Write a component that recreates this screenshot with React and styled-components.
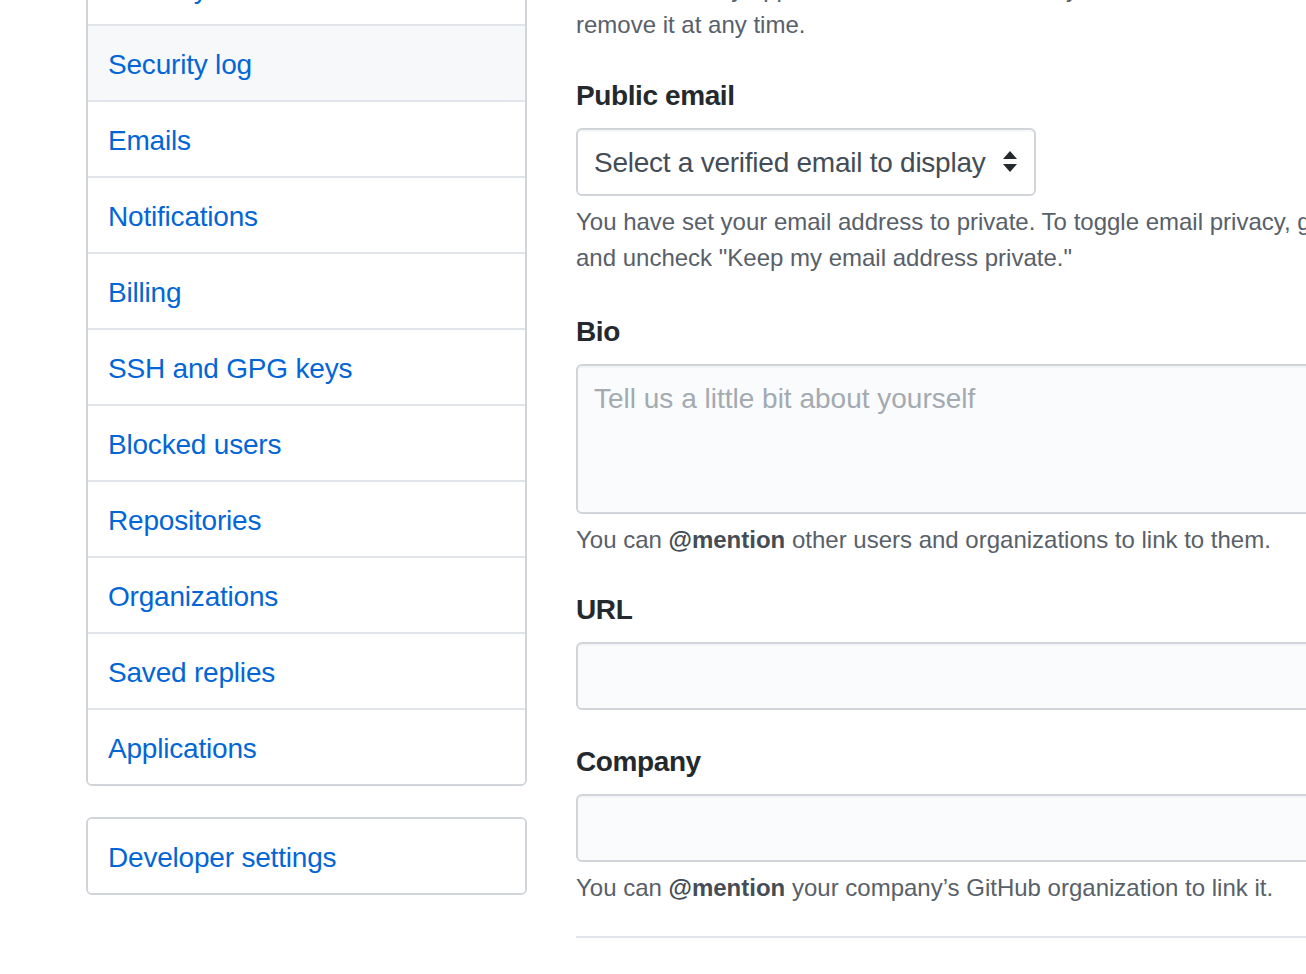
import React from 'react';
import styled, { createGlobalStyle } from 'styled-components';

const GlobalStyle = createGlobalStyle`
  html, body {
    margin: 0;
    padding: 0;
    background: #fff;
    overflow: hidden;
  }
  body {
    font-family: "Liberation Sans", Arial, sans-serif;
    color: #24292e;
  }
`;

const Page = styled.div`
  display: flex;
  align-items: flex-start;
  gap: 49px;
  padding-left: 86px;
  width: 1500px;
`;

const SideColumn = styled.nav`
  flex: 0 0 441px;
  display: flex;
  flex-direction: column;
  gap: 31px;
  margin-top: -52px;
`;

const Menu = styled.div`
  border: 2px solid #d1d5da;
  border-radius: 6px;
  background: #fff;
  overflow: hidden;
`;

const MenuItem = styled.a`
  display: block;
  padding: 18px 20px 14px;
  font-size: 28px;
  line-height: 42px;
  letter-spacing: -0.2px;
  color: #0366d6;
  text-decoration: none;
  background: ${(p) => (p.$active ? '#f6f8fa' : '#fff')};
  & + & {
    border-top: 2px solid #e1e4e8;
  }
`;

const Main = styled.main`
  flex: 0 0 880px;
  margin-top: -29px;
`;

const Note = styled.p`
  margin: ${(p) => (p.$top ? '0' : '8px 0 0')};
  font-size: 24px;
  line-height: 36px;
  color: #586069;
  white-space: nowrap;

  strong {
    color: #444d56;
    font-weight: 700;
  }
  a {
    color: #0366d6;
    text-decoration: none;
  }
`;

const FormGroup = styled.div`
  margin-top: ${(p) => p.$gap}px;
`;

const Label = styled.label`
  display: block;
  font-size: 28px;
  line-height: 40px;
  font-weight: 700;
  letter-spacing: -0.4px;
  margin-bottom: 12px;
  color: #24292e;
`;

const fieldBase = `
  box-sizing: border-box;
  display: block;
  border: 2px solid #d1d5da;
  border-radius: 6px;
  background: #fafbfc;
  box-shadow: inset 0 2px 0 rgba(225, 228, 232, 0.3);
  font-family: "Liberation Sans", Arial, sans-serif;
  font-size: 28px;
  outline: none;
`;

const SelectBox = styled.div`
  ${fieldBase}
  position: relative;
  width: 460px;
  height: 68px;
  padding: 0 50px 0 16px;
  background: #fff;
  color: #444d56;
  line-height: 65px;
  letter-spacing: -0.25px;
  white-space: nowrap;
`;

const Caret = styled.svg`
  position: absolute;
  right: 17px;
  top: 21px;
`;

const TextInput = styled.input`
  ${fieldBase}
  width: 880px;
  height: 68px;
  padding: 0 16px;
  color: #24292e;
`;

const TextArea = styled.textarea`
  ${fieldBase}
  width: 880px;
  height: 150px;
  padding: 13px 16px 11px;
  line-height: 40px;
  resize: none;
  color: #24292e;

  &::placeholder {
    color: #a3aab1;
  }
`;

const Divider = styled.hr`
  margin: 30px 0 0;
  border: 0;
  height: 2px;
  background: #e1e4e8;
`;

const menuItems = [
  'Security',
  'Security log',
  'Emails',
  'Notifications',
  'Billing',
  'SSH and GPG keys',
  'Blocked users',
  'Repositories',
  'Organizations',
  'Saved replies',
  'Applications',
];

export default function App() {
  return (
    <>
      <GlobalStyle />
      <Page>
        <SideColumn>
          <Menu>
            {menuItems.map((item) => (
              <MenuItem key={item} href="#" $active={item === 'Security log'}>
                {item}
              </MenuItem>
            ))}
          </Menu>
          <Menu>
            <MenuItem href="#">Developer settings</MenuItem>
          </Menu>
        </SideColumn>

        <Main>
          <Note $top>
            Your name may appear around GitHub where you contribute or are mentioned. You can
            <br />
            remove it at any time.
          </Note>

          <FormGroup $gap={33}>
            <Label>Public email</Label>
            <SelectBox>
              Select a verified email to display
              <Caret width="14" height="22" viewBox="0 0 14 22">
                <path d="M7 0 L14 8 L0 8 Z" fill="#24292e" />
                <path d="M0 13 L14 13 L7 21 Z" fill="#24292e" />
              </Caret>
            </SelectBox>
            <Note>
              You have set your email address to private. To toggle email privacy, go to{' '}
              <a href="#">email settings</a>
              <br />
              and uncheck "Keep my email address private."
            </Note>
          </FormGroup>

          <FormGroup $gap={36}>
            <Label>Bio</Label>
            <TextArea placeholder="Tell us a little bit about yourself" />
            <Note>
              You can <strong>@mention</strong> other users and organizations to link to them.
            </Note>
          </FormGroup>

          <FormGroup $gap={32}>
            <Label>URL</Label>
            <TextInput type="text" />
          </FormGroup>

          <FormGroup $gap={32}>
            <Label>Company</Label>
            <TextInput type="text" />
            <Note>
              You can <strong>@mention</strong> your company’s GitHub organization to link it.
            </Note>
          </FormGroup>

          <Divider />
        </Main>
      </Page>
    </>
  );
}
